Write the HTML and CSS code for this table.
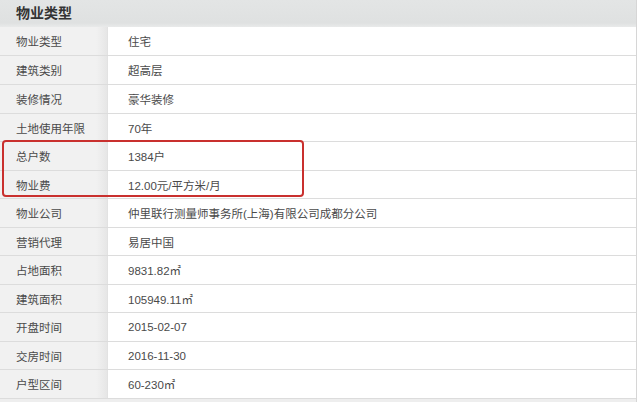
FILE: index.html
```html
<!DOCTYPE html>
<html>
<head>
    <meta charset="utf-8">
    <title>物业类型</title>
    <link rel="stylesheet" href="styles.css">
</head>
<body>
    <section class="info">
        <h2 class="info-title">物业类型</h2>
        <div class="info-rows">
            <div class="row"><span class="label">物业类型</span><span class="value">住宅</span></div>
            <div class="row"><span class="label">建筑类别</span><span class="value">超高层</span></div>
            <div class="row"><span class="label">装修情况</span><span class="value">豪华装修</span></div>
            <div class="row"><span class="label">土地使用年限</span><span class="value">70年</span></div>
            <div class="row"><span class="label">总户数</span><span class="value">1384户</span></div>
            <div class="row"><span class="label">物业费</span><span class="value">12.00元/平方米/月</span></div>
            <div class="row"><span class="label">物业公司</span><span class="value">仲里联行测量师事务所(上海)有限公司成都分公司</span></div>
            <div class="row"><span class="label">营销代理</span><span class="value">易居中国</span></div>
            <div class="row"><span class="label">占地面积</span><span class="value">9831.82㎡</span></div>
            <div class="row"><span class="label">建筑面积</span><span class="value">105949.11㎡</span></div>
            <div class="row"><span class="label">开盘时间</span><span class="value">2015-02-07</span></div>
            <div class="row"><span class="label">交房时间</span><span class="value">2016-11-30</span></div>
            <div class="row"><span class="label">户型区间</span><span class="value">60-230㎡</span></div>
        </div>
        <div class="highlight"></div>
    </section>
</body>
</html>
```

FILE: styles.css
```css
* { box-sizing: border-box; margin: 0; }

body {
    margin: 0;
    background: #fff;
    font-family: "Liberation Sans", "Noto Sans CJK SC", sans-serif;
    font-size: 11.5px;
    color: #4a4a4a;
}

.info {
    position: relative;
    width: 637px;
    height: 402px;
    border-right: 1px solid #d6d6d6;
    background: #eeeeee;
}

.info-title {
    height: 27px;
    padding-left: 16px;
    line-height: 26px;
    font-size: 14px;
    font-weight: bold;
    color: #333;
    background: linear-gradient(#e3e5e5, #dfe1e1 85%, #e9eaea);
}

.row {
    display: grid;
    grid-template-columns: 108px 1fr;
    grid-template-rows: 100%;
    height: 29px;
    border-bottom: 1px solid #dcdcdc;
}

.row:nth-child(2n+4) {
    height: 28px;
}

.label,
.value {
    display: flex;
    align-items: center;
    overflow: hidden;
}

.label {
    padding-left: 16px;
    background: linear-gradient(to right, #f1f1f1, #f1f1f1 90%, #e6e6e6);
    border-right: 1px solid #e2e2e2;
}

.value {
    padding-left: 20px;
    background: #fff;
}

.highlight {
    position: absolute;
    left: 2px;
    top: 140px;
    width: 302px;
    height: 57px;
    border: 2px solid #c9302e;
    border-radius: 4px;
}
```
